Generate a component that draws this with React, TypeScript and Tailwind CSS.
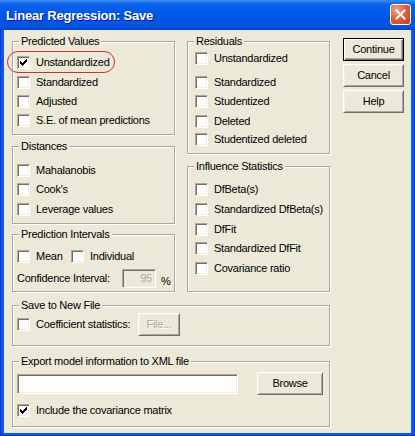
import React from "react";

const Box = ({ checked }: { checked?: boolean }) => (
  <span className="flex h-[13px] w-[13px] shrink-0 items-center justify-center border border-t-[#aca899] border-l-[#aca899] border-b-white border-r-white bg-white shadow-[inset_1px_1px_0_#716f64,inset_-1px_-1px_0_#f1efe2]">
    {checked && (
      <svg width="7" height="7" viewBox="0 0 7 7" shapeRendering="crispEdges">
        <path
          d="M6 0h1v1h-1z M5 1h2v1h-2z M0 2h1v1h-1z M4 2h3v1h-3z M0 3h2v1h-2z M3 3h3v1h-3z M0 4h5v1h-5z M1 5h3v1h-3z M2 6h1v1h-1z"
          fill="#000"
        />
      </svg>
    )}
  </span>
);

const Check = ({ label, checked, className = "" }: { label: string; checked?: boolean; className?: string }) => (
  <div className={`flex h-[13px] items-center ${className}`}>
    <Box checked={checked} />
    <span className="ml-[6px] whitespace-nowrap leading-[13px]">{label}</span>
  </div>
);

const Group = ({ title, className = "", children }: { title: string; className?: string; children?: React.ReactNode }) => (
  <div className={`relative flex flex-col border border-[#aca899] shadow-[inset_1px_1px_0_#fff,1px_1px_0_#fff] ${className}`}>
    <span className="absolute -top-[7px] left-[6px] whitespace-nowrap bg-[#ece9d8] px-[2px] leading-[13px]">{title}</span>
    {children}
  </div>
);

const Btn = ({ children, def, disabled, className = "" }: { children: React.ReactNode; def?: boolean; disabled?: boolean; className?: string }) => (
  <div
    className={`flex items-center justify-center bg-[#ece9d8] leading-[13px] ${
      def
        ? "border border-black shadow-[inset_1px_1px_0_#fff,inset_-1px_-1px_0_#716f64,inset_-2px_-2px_0_#aca899]"
        : "border border-t-white border-l-white border-b-[#716f64] border-r-[#716f64] shadow-[inset_1px_1px_0_#f1efe2,inset_-1px_-1px_0_#aca899]"
    } ${disabled ? "text-[#aca899] [text-shadow:1px_1px_0_#fff]" : "text-black"} ${className}`}
  >
    {children}
  </div>
);

export default function App() {
  return (
    <div className="flex h-[436px] w-[415px] flex-col bg-[#0a5ae8] font-['Liberation_Sans',Arial,sans-serif] text-[11px] tracking-[-0.25px] text-black shadow-[inset_1px_0_0_#0831d9,inset_-1px_0_0_#0831d9,inset_0_-1px_0_#0831d9]">
      {/* title bar */}
      <div className="flex h-[30px] items-start bg-[linear-gradient(to_bottom,#3d8ff7_0%,#0b61ea_14%,#0058e6_50%,#0453df_86%,#0347c8_100%)] pl-[6px] pr-[4px]">
        <span className="mt-[1px] self-center text-[13px] font-bold tracking-[-0.2px] text-white [text-shadow:1px_1px_0_#0a1c8c]">
          Linear Regression: Save
        </span>
        <div className="ml-auto mt-[4px] flex h-[21px] w-[21px] items-center justify-center rounded-[3px] border border-white bg-[radial-gradient(circle_at_30%_25%,#f3a68f_0%,#e2613f_45%,#c53f1c_100%)]">
          <svg width="11" height="11" viewBox="0 0 11 11">
            <path d="M1.5 1.5 L9.5 9.5 M9.5 1.5 L1.5 9.5" stroke="#fff" strokeWidth="2" strokeLinecap="square" />
          </svg>
        </div>
      </div>

      {/* client */}
      <div className="mx-[4px] flex h-[403px] bg-[#ece9d8] pl-[8px] pt-[8px]">
        <div className="mt-[3px] flex w-[318px] flex-col">
          <div className="flex gap-[12px]">
            <div className="flex w-[163px] flex-col">
              <Group title="Predicted Values" className="h-[94px] pl-[4px]">
                <div className="absolute -left-[6px] top-[9px] h-[22px] w-[108px] rounded-full border border-[#c8303a]" />
                <Check label="Unstandardized" checked className="mt-[14px]" />
                <Check label="Standardized" className="mt-[7px]" />
                <Check label="Adjusted" className="mt-[6px]" />
                <Check label="S.E. of mean predictions" className="mt-[6px]" />
              </Group>
              <Group title="Distances" className="mt-[11px] h-[78px] pl-[4px]">
                <Check label="Mahalanobis" className="mt-[17px]" />
                <Check label="Cook's" className="mt-[6px]" />
                <Check label="Leverage values" className="mt-[7px]" />
              </Group>
              <Group title="Prediction Intervals" className="mt-[10px] h-[58px] pl-[4px]">
                <div className="mt-[15px] flex">
                  <div className="w-[54px]">
                    <Check label="Mean" />
                  </div>
                  <Check label="Individual" />
                </div>
                <div className="mt-[5px] flex items-center">
                  <span className="w-[105px] whitespace-nowrap leading-[13px]">Confidence Interval:</span>
                  <div className="flex h-[19px] w-[34px] items-center justify-end border border-t-[#aca899] border-l-[#aca899] border-b-white border-r-white bg-[#ece9d8] pr-[3px] text-[#aca899] shadow-[inset_1px_1px_0_#716f64,inset_-1px_-1px_0_#f1efe2]">
                    95
                  </div>
                  <span className="ml-[5px] pt-[7px] leading-[13px]">%</span>
                </div>
              </Group>
            </div>

            <div className="flex w-[143px] flex-col">
              <Group title="Residuals" className="h-[113px] pl-[7px]">
                <Check label="Unstandardized" className="mt-[10px]" />
                <Check label="Standardized" className="mt-[11px]" />
                <Check label="Studentized" className="mt-[6px]" />
                <Check label="Deleted" className="mt-[7px]" />
                <Check label="Studentized deleted" className="mt-[5px]" />
              </Group>
              <Group title="Influence Statistics" className="mt-[12px] h-[126px] pl-[7px]">
                <Check label="DfBeta(s)" className="mt-[16px]" />
                <Check label="Standardized DfBeta(s)" className="mt-[7px]" />
                <Check label="DfFit" className="mt-[7px]" />
                <Check label="Standardized DfFit" className="mt-[6px]" />
                <Check label="Covariance ratio" className="mt-[7px]" />
              </Group>
            </div>
          </div>

          <Group title="Save to New File" className="mt-[13px] h-[41px] pl-[4px]">
            <div className="mt-[7px] flex items-center">
              <div className="w-[121px]">
                <Check label="Coefficient statistics:" />
              </div>
              <Btn disabled className="h-[23px] w-[42px]">
                File...
              </Btn>
            </div>
          </Group>

          <Group title="Export model information to XML file" className="mt-[15px] h-[66px] pl-[4px]">
            <div className="mt-[10px] flex items-center">
              <div className="h-[20px] w-[221px] border border-t-[#aca899] border-l-[#aca899] border-b-white border-r-white bg-white shadow-[inset_1px_1px_0_#716f64,inset_-1px_-1px_0_#f1efe2]" />
              <Btn className="ml-[19px] h-[23px] w-[66px]">Browse</Btn>
            </div>
            <Check label="Include the covariance matrix" checked className="mt-[9px]" />
          </Group>
        </div>

        <div className="ml-[13px] flex w-[61px] flex-col gap-[3px]">
          <Btn def className="h-[23px]">
            Continue
          </Btn>
          <Btn className="h-[23px]">Cancel</Btn>
          <Btn className="h-[23px]">Help</Btn>
        </div>
      </div>
    </div>
  );
}
